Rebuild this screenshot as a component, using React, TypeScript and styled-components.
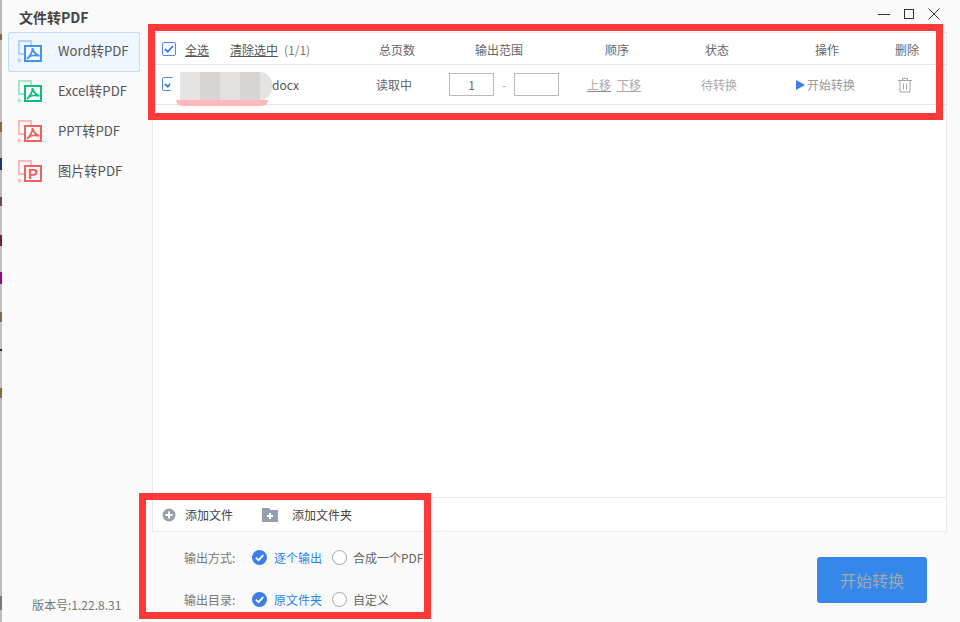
import React from "react";
import styled, { createGlobalStyle } from "styled-components";

const GlobalStyle = createGlobalStyle`
  html, body {
    margin: 0;
    padding: 0;
    width: 960px;
    height: 622px;
    overflow: hidden;
  }
  * {
    box-sizing: border-box;
  }
`;

const navItems = [
  { name: "Word转PDF", color: "#3f92f7", light: "#aed2fb", active: true },
  { name: "Excel转PDF", color: "#10bd7c", light: "#a3e6cc" },
  { name: "PPT转PDF", color: "#f0605c", light: "#f9bcbb" },
  { name: "图片转PDF", color: "#f0605c", light: "#f9bcbb", letter: true },
];

const DocIcon = ({
  color,
  light,
  letter,
}: {
  color: string;
  light: string;
  letter?: boolean;
}) => (
  <svg width="26" height="26" viewBox="0 0 26 26">
    <path d="M6 15H1V2H13V6" fill="none" stroke={light} strokeWidth="2" />
    <path d="M0 19l4 2.5-4 2.5z" fill={light} />
    <rect x="7" y="7" width="16" height="15" fill="#fff" stroke={color} strokeWidth="2" />
    {letter ? (
      <text
        x="15"
        y="20"
        textAnchor="middle"
        fontFamily="Liberation Sans, sans-serif"
        fontWeight="700"
        fontSize="15"
        fill={color}
      >
        P
      </text>
    ) : (
      <path
        d="M14.5 9c0 3.5-2 7.5-5.5 11M14.5 9c.5 3.500 2.500 6 7 8M10.500 18c3-1.500 7-2 11-1"
        fill="none"
        stroke={color}
        strokeWidth="1.8"
      />
    )}
  </svg>
);

const Check = () => (
  <svg width="15" height="15" viewBox="0 0 15 15">
    <circle cx="7.5" cy="7.5" r="7.5" fill="#3a7fe9" />
    <path d="M3.8 7.7l2.7 2.5 4.8-5" fill="none" stroke="#fff" strokeWidth="1.8" />
  </svg>
);

const Box = () => (
  <svg width="15" height="15" viewBox="0 0 15 15">
    <rect x="0.5" y="0.5" width="13" height="13" rx="1.5" fill="#fff" stroke="#4a8ae8" />
    <path d="M3 7l2.8 2.7 5.2-5.700" fill="none" stroke="#3a7fe9" strokeWidth="1.8" />
  </svg>
);

const App = () => {
  return (
    <Page>
      <GlobalStyle />
      <EdgeStrip />
      <Sidebar>
        <AppTitle>文件转PDF</AppTitle>
        <Nav>
          {navItems.map((item) => (
            <NavItem key={item.name} $active={item.active}>
              <DocIcon color={item.color} light={item.light} letter={item.letter} />
              <NavLabel>{item.name}</NavLabel>
            </NavItem>
          ))}
        </Nav>
        <Version>版本号:1.22.8.31</Version>
      </Sidebar>

      <Main>
        <TitleBar>
          <svg width="12" height="12" viewBox="0 0 12 12">
            <path d="M0 6.5H12" stroke="#333" strokeWidth="1" />
          </svg>
          <svg width="12" height="12" viewBox="0 0 12 12">
            <rect x="1.5" y="1.5" width="9" height="9" fill="none" stroke="#333" />
          </svg>
          <svg width="12" height="12" viewBox="0 0 12 12">
            <path d="M0.5 0.5L11.5 11.5M11.5 0.5L0.5 11.5" stroke="#333" />
          </svg>
        </TitleBar>

        <Panel>
          <HeadRow>
            <SelectCell>
              <Box />
              <SelectLink>全选</SelectLink>
              <ClearLink>清除选中</ClearLink>
              <Count>(1/1)</Count>
            </SelectCell>
            <HeadCell>总页数</HeadCell>
            <HeadCell>输出范围</HeadCell>
            <HeadCell>顺序</HeadCell>
            <HeadCell>状态</HeadCell>
            <HeadCell>操作</HeadCell>
            <HeadCell>删除</HeadCell>
          </HeadRow>
          <FileRow>
            <SelectCell>
              <Box />
              <FileName>docx</FileName>
            </SelectCell>
            <BodyCell>读取中</BodyCell>
            <RangeCell>
              <RangeInput defaultValue="1" />
              <Dash>-</Dash>
              <RangeInput defaultValue="" />
            </RangeCell>
            <OrderCell>
              <MoveLink $dark>上移</MoveLink>
              <MoveLink>下移</MoveLink>
            </OrderCell>
            <StatusCell>待转换</StatusCell>
            <ActionCell>
              <PlayMark />
              开始转换
            </ActionCell>
            <TrashCell>
              <svg width="16" height="16" viewBox="0 0 16 16" fill="none" stroke="#a5a5a5">
                <path d="M1 3.5H15M5.5 3.5V1.5H10.5V3.5M3 3.5V15H13V3.5M6.5 6.5V12.5M9.5 6.5V12.5" />
              </svg>
            </TrashCell>
          </FileRow>
          <EmptyArea />
          <Toolbar>
            <ToolButton>
              <svg width="14" height="14" viewBox="0 0 14 14">
                <circle cx="7" cy="7" r="6.5" fill="#989eae" />
                <path d="M7 3.5V10.5M3.5 7H10.5" stroke="#fff" strokeWidth="2" />
              </svg>
              <span>添加文件</span>
            </ToolButton>
            <FolderButton>
              <svg width="16" height="14" viewBox="0 0 16 14">
                <path d="M0 0H7L8.5 2H16V14H0z" fill="#989eae" />
                <path d="M8 5V11M5 8H11" stroke="#fff" strokeWidth="2" />
              </svg>
              <span>添加文件夹</span>
            </FolderButton>
          </Toolbar>
        </Panel>

        <Bottom>
          <Options>
            <OptionRow>
              <OptionLabel>输出方式:</OptionLabel>
              <Choice $on>
                <Check />
                <span>逐个输出</span>
              </Choice>
              <Choice>
                <Radio />
                <span>合成一个PDF</span>
              </Choice>
            </OptionRow>
            <OptionRow>
              <OptionLabel>输出目录:</OptionLabel>
              <Choice $on>
                <Check />
                <span>原文件夹</span>
              </Choice>
              <Choice>
                <Radio />
                <span>自定义</span>
              </Choice>
            </OptionRow>
          </Options>
          <StartButton>开始转换</StartButton>
        </Bottom>
      </Main>

      <Blur>
        <Tile $shade="#e6e4e3" />
        <Tile $shade="#d6d5d4" />
        <Tile $shade="#e2e1e0" />
        <Tile $shade="#d6d5d4" />
        <Tile $shade="#e6e4e3" />
      </Blur>
      <TopMark />
      <BottomMark />
    </Page>
  );
};

export default App;

const Page = styled.div`
  position: relative;
  display: flex;
  width: 960px;
  height: 622px;
  background: #fafafa;
  font-family: "Noto Sans CJK SC", "Noto Sans", sans-serif;
  font-size: 12px;
  color: #555;
  overflow: hidden;
`;

// other windows peeking out behind the app on the left edge
const EdgeStrip = styled.div`
  width: 2px;
  flex-shrink: 0;
  background: linear-gradient(
    #b9b9b9 0 34px,
    #8a6a3c 34px 40px,
    #c2c2c2 40px 122px,
    #8a6a3c 122px 132px,
    #b0b0b0 132px 158px,
    #1f3a6a 158px 170px,
    #bcbcbc 170px 197px,
    #6a4a4a 197px 206px,
    #c2c2c2 206px 235px,
    #7a1a3a 235px 246px,
    #c2c2c2 246px 272px,
    #8a0a8a 272px 284px,
    #c2c2c2 284px 312px,
    #7a6a5a 312px 322px,
    #c2c2c2 322px 349px,
    #222 349px 351px,
    #c2c2c2 351px 388px,
    #8a6a3c 388px 398px,
    #bdbdbd 398px 596px,
    #777 596px 610px,
    #bdbdbd 610px
  );
`;

const Sidebar = styled.aside`
  display: flex;
  flex-direction: column;
  width: 150px;
  flex-shrink: 0;
`;

const AppTitle = styled.h1`
  margin: 0;
  height: 32px;
  padding: 8px 0 0 17px;
  font-size: 14px;
  line-height: 18px;
  font-weight: 700;
  color: #444;
`;

const Nav = styled.nav`
  display: flex;
  flex-direction: column;
  padding-left: 6px;
`;

const NavItem = styled.div<{ $active?: boolean }>`
  display: flex;
  align-items: center;
  gap: 14px;
  width: 132px;
  height: 40px;
  padding: 0 0 1px 9px;
  color: #555;
  border: 1px solid ${(p) => (p.$active ? "#bcdcfb" : "transparent")};
  border-radius: 2px;
  background: ${(p) => (p.$active ? "#eff6fe" : "transparent")};
`;

const NavLabel = styled.span`
  margin-bottom: 2px;
  font-size: 13.2px;
`;

const Version = styled.div`
  margin-top: auto;
  margin-bottom: 8px;
  padding-left: 30px;
  font-size: 12px;
  line-height: 18px;
  color: #777;
`;

const Main = styled.main`
  display: flex;
  flex-direction: column;
  flex: 1;
  min-width: 0;
`;

const TitleBar = styled.header`
  display: flex;
  justify-content: flex-end;
  gap: 13px;
  height: 32px;
  padding: 8px 20px 0 0;
`;

const Panel = styled.section`
  display: flex;
  flex-direction: column;
  width: 795px;
  height: 500px;
  background: #fff;
  border: 1px solid #e9e9e9;
`;

const columns = "209px 70px 134px 102px 98px 122px 38px";

const HeadRow = styled.div`
  display: grid;
  grid-template-columns: ${columns};
  align-items: center;
  height: 32px;
  padding-top: 1px;
  border-bottom: 1px solid #e6e6e6;
`;

const FileRow = styled.div`
  display: grid;
  grid-template-columns: ${columns};
  align-items: center;
  height: 40px;
  border-bottom: 1px solid #e6e6e6;
`;

const SelectCell = styled.div`
  display: flex;
  align-items: center;
  padding-left: 9px;
`;

const SelectLink = styled.span`
  margin-left: 8px;
  color: #555;
  text-decoration: underline;
`;

const ClearLink = styled.span`
  margin-left: 21px;
  color: #555;
  text-decoration: underline;
`;

const Count = styled.span`
  margin-left: 6px;
  color: #777;
`;

const FileName = styled.span`
  margin-left: 95px;
  font-size: 12px;
  color: #555;
`;

const HeadCell = styled.div`
  text-align: center;
  color: #666;
`;

const BodyCell = styled.div`
  text-align: center;
  padding-right: 6px;
  color: #666;
`;

const RangeCell = styled.div`
  display: flex;
  align-items: center;
  padding-left: 17px;
`;

const RangeInput = styled.input`
  width: 45px;
  height: 23px;
  padding: 0;
  border: 1px solid #bbb;
  outline: none;
  background: #fff;
  font-family: inherit;
  font-size: 12px;
  color: #667;
  text-align: center;
`;

const Dash = styled.span`
  width: 20px;
  text-align: center;
  color: #aaa;
`;

const OrderCell = styled.div`
  display: flex;
  gap: 6px;
  padding-left: 21px;
`;

const MoveLink = styled.span<{ $dark?: boolean }>`
  color: #aaa;
  text-decoration: underline;
  text-decoration-color: ${(p) => (p.$dark ? "#888" : "#aaa")};
`;

const StatusCell = styled.div`
  text-align: center;
  padding-left: 4px;
  color: #aaa;
`;

const ActionCell = styled.div`
  display: flex;
  align-items: center;
  padding-left: 30px;
  color: #999;
`;

const PlayMark = styled.i`
  width: 0;
  height: 0;
  margin-right: 2px;
  border-left: 9px solid #3a7fe9;
  border-top: 5.5px solid transparent;
  border-bottom: 5.5px solid transparent;
`;

const TrashCell = styled.div`
  display: flex;
  justify-content: center;
  padding-right: 4px;
`;

const EmptyArea = styled.div`
  flex: 1;
`;

const Toolbar = styled.div`
  display: flex;
  align-items: center;
  height: 34px;
  padding-left: 9px;
  border-top: 1px solid #e9e9e9;
`;

const ToolButton = styled.div`
  display: flex;
  align-items: center;
  gap: 9px;
  color: #444;
`;

const FolderButton = styled(ToolButton)`
  gap: 14px;
  margin-left: 29px;
`;

const Bottom = styled.div`
  display: flex;
  justify-content: space-between;
  align-items: flex-start;
  flex: 1;
  padding: 0 33px 0 32px;
  width: 808px;
`;

const Options = styled.div`
  display: flex;
  flex-direction: column;
  gap: 24px;
  margin-top: 16px;
`;

const OptionRow = styled.div`
  display: flex;
  align-items: center;
  height: 18px;
`;

const OptionLabel = styled.span`
  width: 68px;
  color: #777;
`;

const Choice = styled.div<{ $on?: boolean }>`
  display: flex;
  align-items: center;
  gap: ${(p) => (p.$on ? "7px" : "6px")};
  width: 80px;
  white-space: nowrap;
  color: ${(p) => (p.$on ? "#1f86ee" : "#666")};
`;

const Radio = styled.i`
  width: 15px;
  height: 15px;
  flex-shrink: 0;
  border: 1px solid #a6a6a6;
  border-radius: 50%;
  background: #fff;
`;

const StartButton = styled.button`
  width: 110px;
  height: 46px;
  margin-top: 25px;
  border: none;
  border-radius: 3px;
  background: #3588ea;
  font-family: inherit;
  font-size: 16px;
  color: #a3a7ab;
`;

const Blur = styled.div`
  position: absolute;
  left: 170px;
  top: 72px;
  display: flex;
  width: 102px;
  height: 28px;
  padding-left: 10px;
  border-radius: 14px;
  background: #fff;

  &::after {
    content: "";
    position: absolute;
    left: 6px;
    right: 4px;
    top: 100%;
    height: 6px;
    border-radius: 0 0 8px 8px;
    background: #ffb9b9;
  }
`;

const Tile = styled.div<{ $shade: string }>`
  width: 20px;
  height: 100%;
  background: ${(p) => p.$shade};

  &:last-child {
    width: 12px;
    border-radius: 0 14px 14px 0;
  }
`;

const TopMark = styled.div`
  position: absolute;
  left: 148px;
  top: 24px;
  width: 795px;
  height: 96px;
  border: 7px solid #ff3838;
`;

const BottomMark = styled.div`
  position: absolute;
  left: 139px;
  top: 493px;
  width: 292px;
  height: 126px;
  border: 7px solid #ff3838;
`;
